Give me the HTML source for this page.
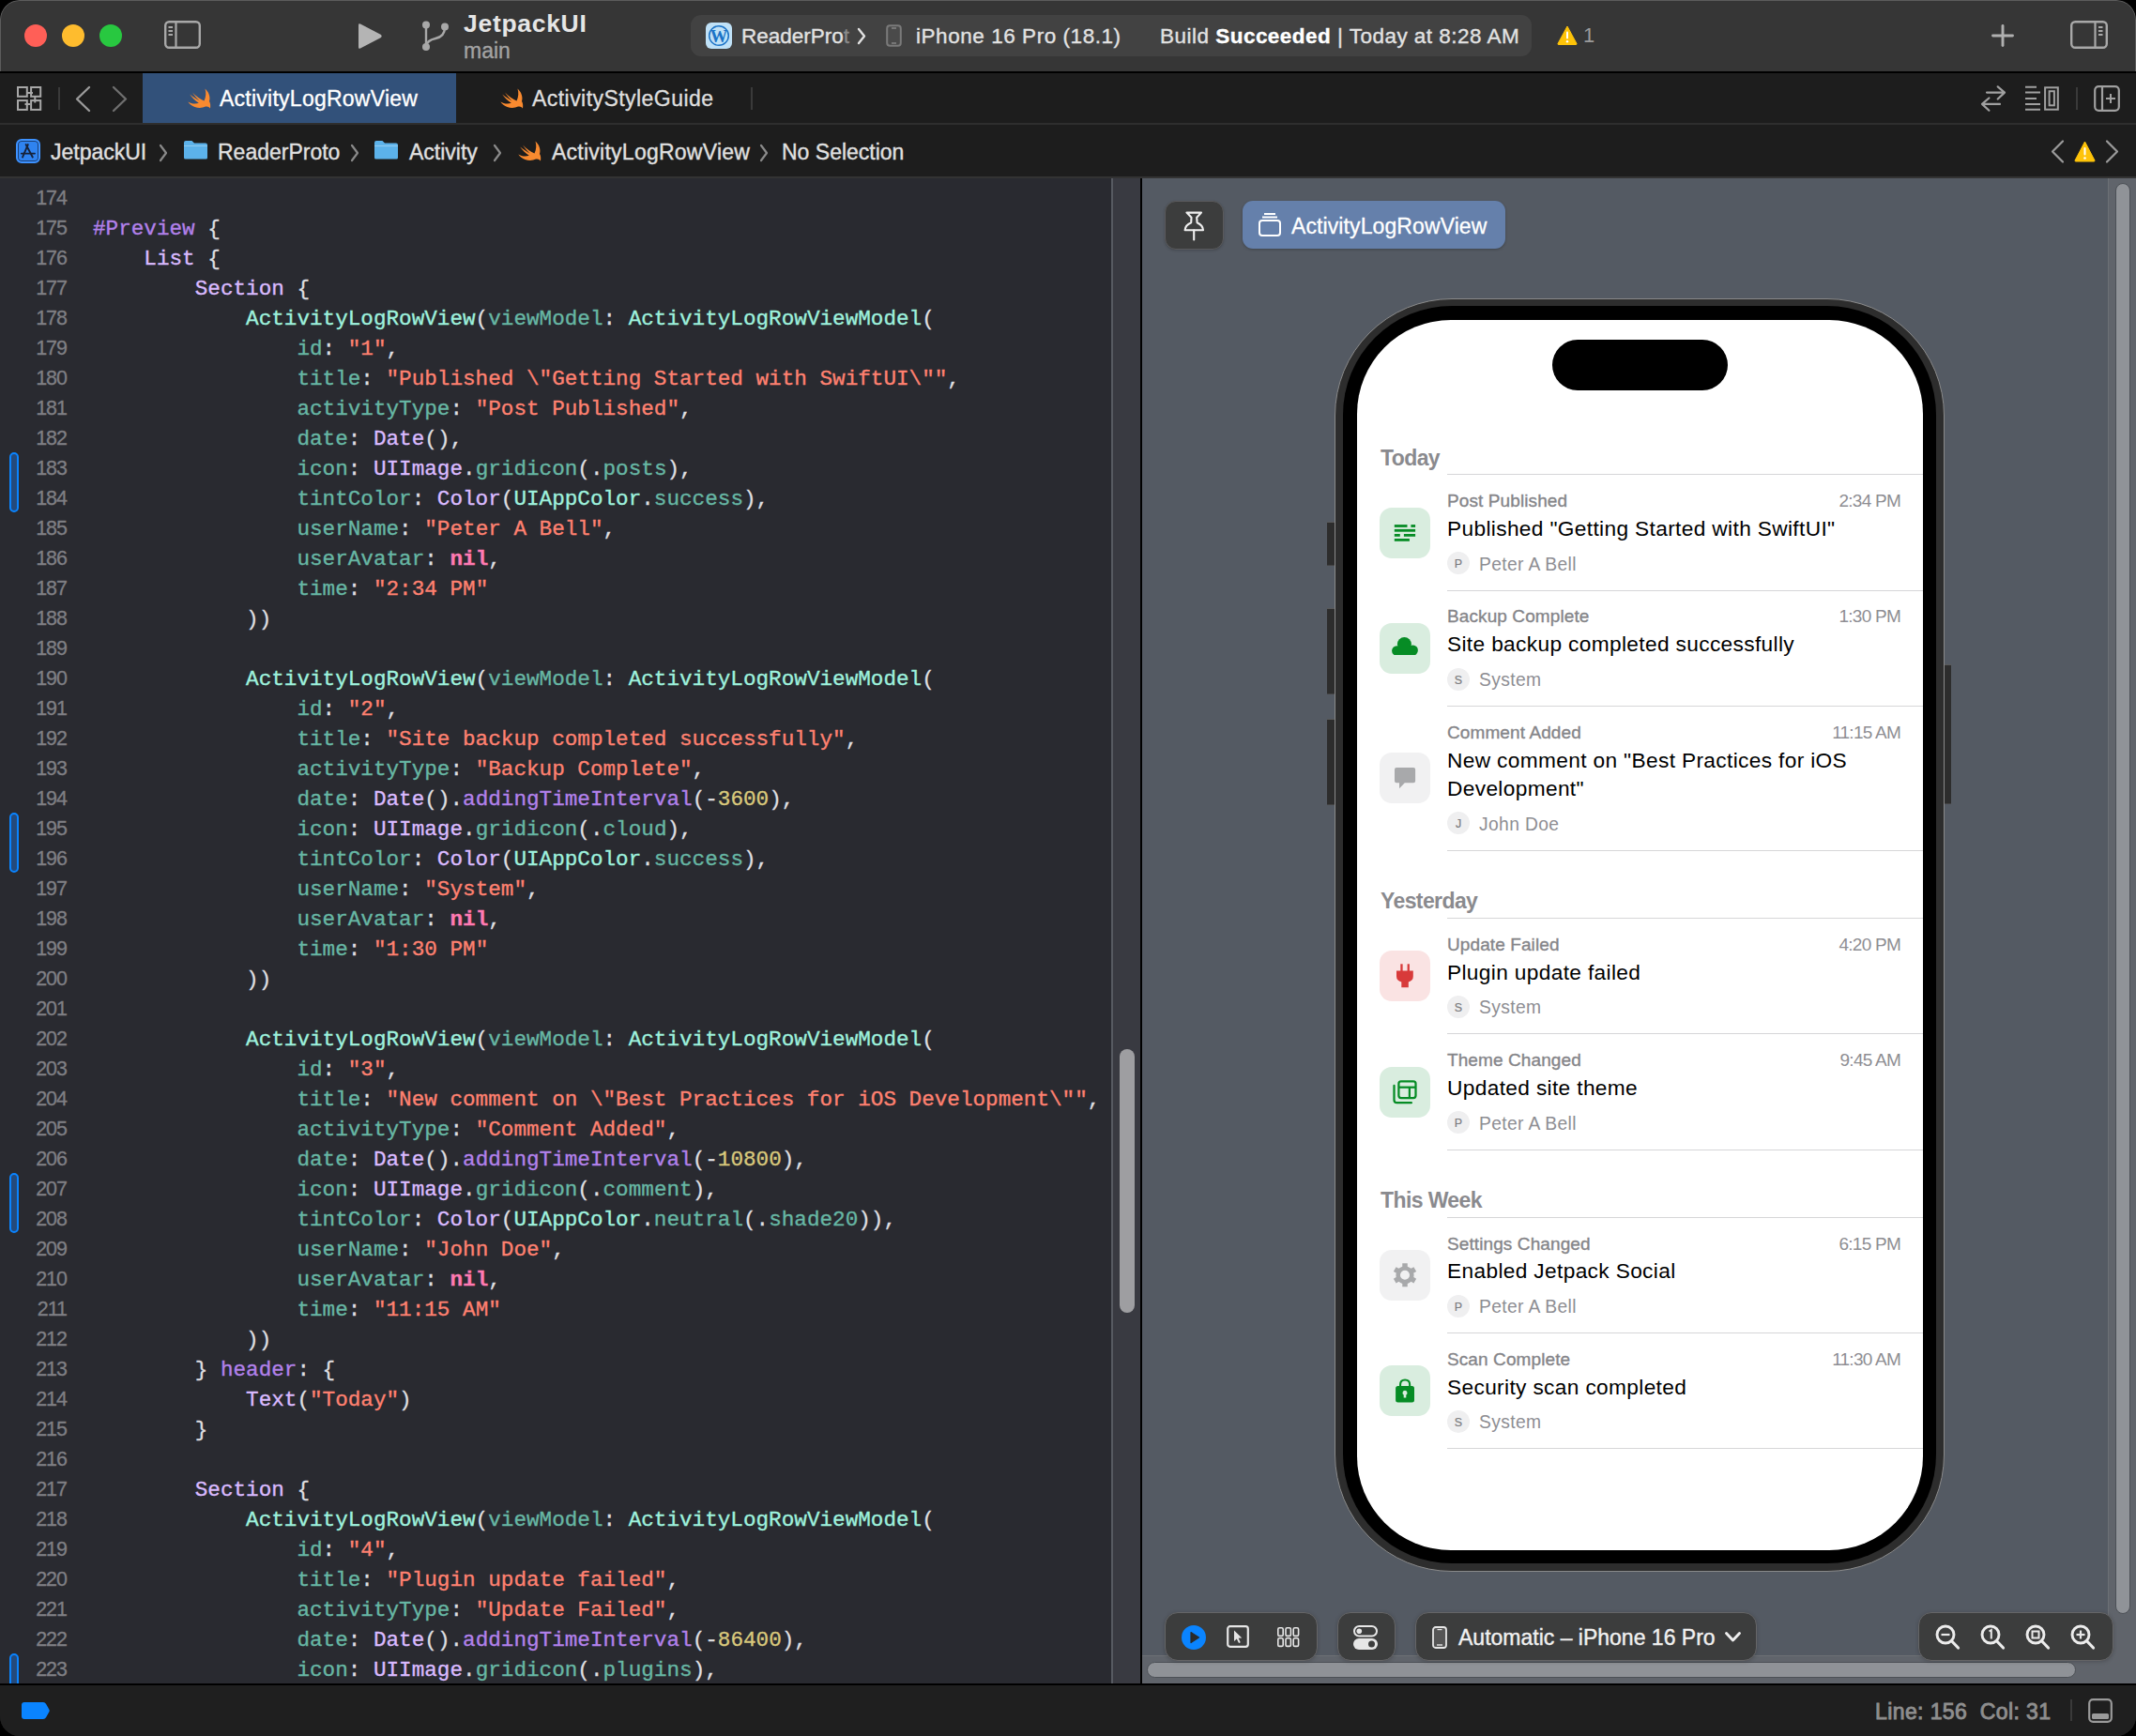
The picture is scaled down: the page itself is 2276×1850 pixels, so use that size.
<!DOCTYPE html><html><head><meta charset="utf-8"><title>Xcode</title><style>
*{margin:0;padding:0;box-sizing:border-box}
html,body{width:2276px;height:1850px;overflow:hidden;background:#000}
body{position:relative;font-family:"Liberation Sans",sans-serif}
.a{position:absolute}
.win{position:absolute;left:0;top:0;width:2276px;height:1850px;border-radius:21px;overflow:hidden;background:#1e1e1e}
.t{position:absolute;white-space:pre;line-height:1}
.u{-webkit-text-stroke:0.35px currentColor}
svg{position:absolute;overflow:visible}
/* code */
.code{position:absolute;left:0;top:196px;font-family:"Liberation Mono",monospace;font-size:22.65px;line-height:32px;white-space:pre;color:#dfdfe0}
.cl{-webkit-text-stroke:0.35px currentColor}
.ln{position:absolute;left:0;width:71px;text-align:right;color:#7f7f84;font-family:"Liberation Sans",sans-serif;font-size:21.5px;letter-spacing:-1px;margin-top:-1.5px;-webkit-text-stroke:0.3px #7f7f84}
.cl{position:absolute;left:99px}
.k{color:#ff7ab2;font-weight:bold}
.s{color:#ff8170}
.n{color:#d9c97c}
.tp{color:#dabaff}
.pt{color:#9ef1dd}
.pf{color:#67b7a4}
.of{color:#b281eb}
.mc{color:#b281eb}
</style></head><body><div class="win">
<div class="a" style="left:0;top:0;width:2276px;height:76px;background:#363636;border:1px solid #5c5c5c;border-bottom:none;border-radius:21px 21px 0 0"></div>
<div class="a" style="left:0;top:76px;width:2276px;height:2px;background:#000"></div>
<div class="a" style="left:26px;top:26px;width:24px;height:24px;border-radius:50%;background:#ff5f57"></div>
<div class="a" style="left:66px;top:26px;width:24px;height:24px;border-radius:50%;background:#febc2e"></div>
<div class="a" style="left:106px;top:26px;width:24px;height:24px;border-radius:50%;background:#28c840"></div>
<svg style="left:175px;top:22px" width="39" height="30" viewBox="0 0 39 30"><rect x="1.2" y="1.2" width="36.6" height="27.6" rx="4" fill="none" stroke="#a8a8a8" stroke-width="2.4"/><line x1="12.5" y1="1.5" x2="12.5" y2="28.5" stroke="#a8a8a8" stroke-width="2.2"/><g stroke="#a8a8a8" stroke-width="1.8"><line x1="4.5" y1="7" x2="9" y2="7"/><line x1="4.5" y1="11" x2="9" y2="11"/><line x1="4.5" y1="15" x2="9" y2="15"/></g></svg>
<svg style="left:380px;top:24px" width="28" height="29" viewBox="0 0 28 29"><path d="M2 2.5 Q2 0.5 4 1.5 L26 13 Q27.5 14.5 26 16 L4 27.5 Q2 28.5 2 26.5 Z" fill="#b4b4b4"/></svg>
<svg style="left:449px;top:22px" width="30" height="33" viewBox="0 0 30 33"><g fill="none" stroke="#a8a8a8" stroke-width="2.4"><line x1="5" y1="5" x2="5" y2="27"/><path d="M25 7 Q25 17 15 19 Q6 21 5 27"/></g><g fill="#a8a8a8"><circle cx="5" cy="4.5" r="4"/><circle cx="25" cy="6.5" r="4"/><circle cx="5" cy="28" r="4"/></g></svg>
<div class="t" style="left:494px;top:12px;font-size:26.5px;font-weight:bold;letter-spacing:0.7px;color:#e6e6e6">JetpackUI</div>
<div class="t u" style="left:494px;top:43px;font-size:23px;color:#a3a3a3">main</div>
<div class="a" style="left:736px;top:16px;width:896px;height:44px;border-radius:11px;background:#424242"></div>
<div class="a" style="left:752px;top:24px;width:28px;height:28px;border-radius:6px;background:#bfe1f7"></div>
<svg style="left:754px;top:26px" width="24" height="24" viewBox="0 0 24 24"><circle cx="12" cy="12" r="10.3" fill="none" stroke="#1c73c6" stroke-width="1.5"/><text x="12" y="18.6" text-anchor="middle" font-family="Liberation Serif" font-weight="bold" font-size="18.5" fill="#1c73c6">W</text></svg>
<div class="t u" style="left:790px;top:28px;font-size:22.5px;color:#e2e2e2">ReaderPro<span style="color:#8a8a8a">t</span></div>
<svg style="left:913px;top:29px" width="11" height="19" viewBox="0 0 11 19"><path d="M2 2 L8 9.5 L2 17" fill="none" stroke="#e2e2e2" stroke-width="2.4" stroke-linecap="round" stroke-linejoin="round"/></svg>
<svg style="left:944px;top:26px" width="17" height="24" viewBox="0 0 17 24"><rect x="1.2" y="1.2" width="14.6" height="21.6" rx="3" fill="#4a4a4a" stroke="#7a7a7a" stroke-width="2"/><line x1="6" y1="4" x2="11" y2="4" stroke="#8e8e8e" stroke-width="1.3"/><line x1="6" y1="20" x2="11" y2="20" stroke="#8e8e8e" stroke-width="1.3"/></svg>
<div class="t u" style="left:976px;top:28px;font-size:22.5px;letter-spacing:0.55px;color:#e2e2e2">iPhone 16 Pro (18.1)</div>
<div class="t u" style="left:1236px;top:28px;font-size:22.5px;letter-spacing:0.48px;color:#e2e2e2">Build <b style="color:#fff">Succeeded</b> | Today at 8:28 AM</div>
<svg style="left:1659px;top:27px" width="22" height="21" viewBox="0 0 22 21"><path d="M11 1 L21 19.5 Q21.3 20.5 20 20.5 L2 20.5 Q0.7 20.5 1 19.5 Z" fill="#fec309" stroke="#fec309" stroke-width="1" stroke-linejoin="round"/><rect x="10" y="6.5" width="2" height="8" rx="1" fill="#fff"/><circle cx="11" cy="17.3" r="1.2" fill="#fff"/></svg>
<div class="t" style="left:1687px;top:27px;font-size:22px;color:#9a9a9a">1</div>
<svg style="left:2121px;top:25px" width="26" height="26" viewBox="0 0 26 26"><g stroke="#b0b0b0" stroke-width="2.9" stroke-linecap="round"><line x1="13" y1="2.5" x2="13" y2="23.5"/><line x1="2.5" y1="13" x2="23.5" y2="13"/></g></svg>
<svg style="left:2206px;top:22px" width="40" height="30" viewBox="0 0 40 30"><rect x="1.2" y="1.2" width="37.6" height="27.6" rx="4" fill="none" stroke="#a8a8a8" stroke-width="2.4"/><line x1="26.5" y1="1.5" x2="26.5" y2="28.5" stroke="#a8a8a8" stroke-width="2.2"/><g stroke="#a8a8a8" stroke-width="1.8"><line x1="30" y1="7" x2="34.5" y2="7"/><line x1="30" y1="11" x2="34.5" y2="11"/><line x1="30" y1="15" x2="34.5" y2="15"/></g></svg>
<div class="a" style="left:0;top:78px;width:2276px;height:53px;background:#1d1d1d"></div>
<div class="a" style="left:0;top:131px;width:2276px;height:2px;background:#2e2e2e"></div>
<svg style="left:18px;top:92px" width="27" height="27" viewBox="0 0 27 27"><g fill="none" stroke="#a8a8a8" stroke-width="2"><rect x="1" y="1" width="9.8" height="9.8"/><rect x="15.1" y="1" width="10.1" height="9.8"/><rect x="1" y="15.1" width="9.8" height="9.8"/><rect x="15.1" y="15.1" width="10.1" height="9.8"/><line x1="11" y1="7.1" x2="17" y2="7.1"/><line x1="19.3" y1="11" x2="19.3" y2="17.5"/><line x1="8.5" y1="19" x2="14" y2="19"/></g></svg>
<div class="a" style="left:62px;top:93px;width:2px;height:24px;background:#3a3a3a"></div>
<svg style="left:79px;top:91px" width="18" height="29" viewBox="0 0 18 29"><path d="M16 2 L3 14.5 L16 27" fill="none" stroke="#9a9a9a" stroke-width="2.4" stroke-linecap="round" stroke-linejoin="round"/></svg>
<svg style="left:119px;top:91px" width="18" height="29" viewBox="0 0 18 29"><path d="M2 2 L15 14.5 L2 27" fill="none" stroke="#6e6e6e" stroke-width="2.4" stroke-linecap="round" stroke-linejoin="round"/></svg>
<div class="a" style="left:152px;top:78px;width:334px;height:53px;background:#32517a"></div>
<svg style="left:200px;top:94px" width="25" height="22" viewBox="0 0 25 22"><path d="M18.5 0.5 C22.5 4 24.5 9.5 23 14 C24.2 15.8 24.5 18.5 24 21.5 C22.8 19.6 20.8 19 19 19.6 C15.8 21.2 11.5 21.6 7.5 20 C4.5 18.8 2 16.8 0.3 14.5 C3.5 16.5 8 17.3 11.8 15.8 C8 13.3 4.5 9.8 2.2 6.5 C5.5 9.2 9.3 11.8 12.7 13.5 C9.8 11 7 7.5 5 4.5 C9 8.5 13.8 12 17.5 13.4 C19.5 9.5 19.8 4.5 18.5 0.5 Z" fill="#f98a2f"/></svg>
<div class="t u" style="left:234px;top:94px;font-size:23px;letter-spacing:0.25px;color:#ffffff">ActivityLogRowView</div>
<svg style="left:533px;top:94px" width="25" height="22" viewBox="0 0 25 22"><path d="M18.5 0.5 C22.5 4 24.5 9.5 23 14 C24.2 15.8 24.5 18.5 24 21.5 C22.8 19.6 20.8 19 19 19.6 C15.8 21.2 11.5 21.6 7.5 20 C4.5 18.8 2 16.8 0.3 14.5 C3.5 16.5 8 17.3 11.8 15.8 C8 13.3 4.5 9.8 2.2 6.5 C5.5 9.2 9.3 11.8 12.7 13.5 C9.8 11 7 7.5 5 4.5 C9 8.5 13.8 12 17.5 13.4 C19.5 9.5 19.8 4.5 18.5 0.5 Z" fill="#f98a2f"/></svg>
<div class="t u" style="left:567px;top:94px;font-size:23px;letter-spacing:0.45px;color:#dedede">ActivityStyleGuide</div>
<div class="a" style="left:800px;top:93px;width:2px;height:24px;background:#3a3a3a"></div>
<svg style="left:2100px;top:80px" width="50" height="50" viewBox="2100 80 50 50"><g fill="none" stroke="#a0a0a0" stroke-width="2.2" stroke-linecap="round" stroke-linejoin="round"><path d="M2117 98.6 L2136 98.6 M2128.7 92.3 L2136 98.6 L2128.7 105.5"/><path d="M2131 110.9 L2112 110.9 M2119.4 104.5 L2112 110.9 L2119.4 117.7"/></g></svg>
<svg style="left:2150px;top:80px" width="50" height="50" viewBox="2150 80 50 50"><g stroke="#a0a0a0" stroke-width="2"><line x1="2158" y1="92.8" x2="2170" y2="92.8"/><line x1="2158" y1="98.6" x2="2174" y2="98.6"/><line x1="2158" y1="105" x2="2170" y2="105"/><line x1="2158" y1="110.9" x2="2174" y2="110.9"/><line x1="2158" y1="116.8" x2="2174" y2="116.8"/></g><g fill="none" stroke="#a0a0a0" stroke-width="2"><rect x="2179.1" y="93.3" width="13.7" height="23.4"/><rect x="2183.6" y="97.2" width="5.3" height="15.1"/></g></svg>
<div class="a" style="left:2212px;top:93px;width:2px;height:24px;background:#3a3a3a"></div>
<svg style="left:2231px;top:91px" width="28" height="28" viewBox="0 0 28 28"><rect x="1.2" y="1.2" width="25.6" height="25.6" rx="4" fill="none" stroke="#a0a0a0" stroke-width="2.2"/><line x1="9" y1="1.5" x2="9" y2="26.5" stroke="#a0a0a0" stroke-width="2.2"/><g stroke="#a0a0a0" stroke-width="2"><line x1="18" y1="9" x2="18" y2="19"/><line x1="13" y1="14" x2="23" y2="14"/></g></svg>
<div class="a" style="left:0;top:133px;width:2276px;height:55px;background:#1d1d1d"></div>
<div class="a" style="left:0;top:188px;width:2276px;height:2px;background:#333333"></div>
<div class="a" style="left:17px;top:148px;width:26px;height:26px;border-radius:6px;background:#2f83f0;border:2px solid #3d92ff;box-shadow:inset 0 0 0 1px #1b3f75"></div>
<svg style="left:20px;top:151px" width="20" height="20" viewBox="0 0 20 20"><g stroke="#17233a" stroke-width="1.9" fill="none" stroke-linecap="round"><path d="M9.8 3 L4 16.5"/><path d="M7.6 3 L14.8 16.5"/><path d="M2.8 12.6 L17 12.6"/></g></svg>
<div class="t u" style="left:54px;top:151px;font-size:23px;color:#e0e0e0">JetpackUI</div>
<svg style="left:169px;top:153px" width="11" height="20" viewBox="0 0 11 20"><path d="M2 2 L8 10.0 L2 18" fill="none" stroke="#8a8a8a" stroke-width="2.2" stroke-linecap="round" stroke-linejoin="round"/></svg>
<svg style="left:195px;top:149px" width="27" height="21" viewBox="0 0 27 21"><path d="M1 3 Q1 1 3 1 L9.5 1 L12 3.5 L24 3.5 Q26 3.5 26 5.5 L26 19 Q26 20.5 24.5 20.5 L2.5 20.5 Q1 20.5 1 19 Z" fill="#5cb2ea"/><path d="M1 6.5 L26 6.5" stroke="#8fcbf2" stroke-width="1.2"/></svg>
<div class="t u" style="left:232px;top:151px;font-size:23px;color:#e0e0e0">ReaderProto</div>
<svg style="left:373px;top:153px" width="11" height="20" viewBox="0 0 11 20"><path d="M2 2 L8 10.0 L2 18" fill="none" stroke="#8a8a8a" stroke-width="2.2" stroke-linecap="round" stroke-linejoin="round"/></svg>
<svg style="left:398px;top:149px" width="27" height="21" viewBox="0 0 27 21"><path d="M1 3 Q1 1 3 1 L9.5 1 L12 3.5 L24 3.5 Q26 3.5 26 5.5 L26 19 Q26 20.5 24.5 20.5 L2.5 20.5 Q1 20.5 1 19 Z" fill="#5cb2ea"/><path d="M1 6.5 L26 6.5" stroke="#8fcbf2" stroke-width="1.2"/></svg>
<div class="t u" style="left:436px;top:151px;font-size:23px;color:#e0e0e0">Activity</div>
<svg style="left:525px;top:153px" width="11" height="20" viewBox="0 0 11 20"><path d="M2 2 L8 10.0 L2 18" fill="none" stroke="#8a8a8a" stroke-width="2.2" stroke-linecap="round" stroke-linejoin="round"/></svg>
<svg style="left:552px;top:150px" width="25" height="22" viewBox="0 0 25 22"><path d="M18.5 0.5 C22.5 4 24.5 9.5 23 14 C24.2 15.8 24.5 18.5 24 21.5 C22.8 19.6 20.8 19 19 19.6 C15.8 21.2 11.5 21.6 7.5 20 C4.5 18.8 2 16.8 0.3 14.5 C3.5 16.5 8 17.3 11.8 15.8 C8 13.3 4.5 9.8 2.2 6.5 C5.5 9.2 9.3 11.8 12.7 13.5 C9.8 11 7 7.5 5 4.5 C9 8.5 13.8 12 17.5 13.4 C19.5 9.5 19.8 4.5 18.5 0.5 Z" fill="#f98a2f"/></svg>
<div class="t u" style="left:588px;top:151px;font-size:23px;letter-spacing:0.25px;color:#e0e0e0">ActivityLogRowView</div>
<svg style="left:809px;top:153px" width="11" height="20" viewBox="0 0 11 20"><path d="M2 2 L8 10.0 L2 18" fill="none" stroke="#8a8a8a" stroke-width="2.2" stroke-linecap="round" stroke-linejoin="round"/></svg>
<div class="t u" style="left:833px;top:151px;font-size:23px;color:#e0e0e0">No Selection</div>
<svg style="left:2185px;top:149px" width="15" height="25" viewBox="0 0 15 25"><path d="M13 1.5 L2 12.5 L13 23.5" fill="none" stroke="#9a9a9a" stroke-width="2.2" stroke-linecap="round" stroke-linejoin="round"/></svg>
<svg style="left:2210px;top:150px" width="23" height="23" viewBox="0 0 23 23"><path d="M11.5 1 L22 21 Q22.3 22 21 22 L2 22 Q0.7 22 1 21 Z" fill="#fec309" stroke="#fec309" stroke-width="1" stroke-linejoin="round"/><rect x="10.5" y="7" width="2" height="8.5" rx="1" fill="#fff"/><circle cx="11.5" cy="18.5" r="1.3" fill="#fff"/></svg>
<svg style="left:2243px;top:149px" width="15" height="25" viewBox="0 0 15 25"><path d="M2 1.5 L13 12.5 L2 23.5" fill="none" stroke="#9a9a9a" stroke-width="2.2" stroke-linecap="round" stroke-linejoin="round"/></svg>
<div class="a" style="left:0;top:190px;width:1185px;height:1604px;background:#292a30;overflow:hidden">
<div class="code" style="top:6px">
<div class="ln" style="top:0px">174</div>
<div class="cl" style="top:0px"></div>
<div class="ln" style="top:32px">175</div>
<div class="cl" style="top:32px"><span class="mc">#Preview</span> {</div>
<div class="ln" style="top:64px">176</div>
<div class="cl" style="top:64px">    <span class="tp">List</span> {</div>
<div class="ln" style="top:96px">177</div>
<div class="cl" style="top:96px">        <span class="tp">Section</span> {</div>
<div class="ln" style="top:128px">178</div>
<div class="cl" style="top:128px">            <span class="pt">ActivityLogRowView</span>(<span class="pf">viewModel</span>: <span class="pt">ActivityLogRowViewModel</span>(</div>
<div class="ln" style="top:160px">179</div>
<div class="cl" style="top:160px">                <span class="pf">id</span>: <span class="s">"1"</span>,</div>
<div class="ln" style="top:192px">180</div>
<div class="cl" style="top:192px">                <span class="pf">title</span>: <span class="s">"Published \"Getting Started with SwiftUI\""</span>,</div>
<div class="ln" style="top:224px">181</div>
<div class="cl" style="top:224px">                <span class="pf">activityType</span>: <span class="s">"Post Published"</span>,</div>
<div class="ln" style="top:256px">182</div>
<div class="cl" style="top:256px">                <span class="pf">date</span>: <span class="tp">Date</span>(),</div>
<div class="ln" style="top:288px">183</div>
<div class="cl" style="top:288px">                <span class="pf">icon</span>: <span class="tp">UIImage</span>.<span class="pf">gridicon</span>(.<span class="pf">posts</span>),</div>
<div class="ln" style="top:320px">184</div>
<div class="cl" style="top:320px">                <span class="pf">tintColor</span>: <span class="tp">Color</span>(<span class="pt">UIAppColor</span>.<span class="pf">success</span>),</div>
<div class="ln" style="top:352px">185</div>
<div class="cl" style="top:352px">                <span class="pf">userName</span>: <span class="s">"Peter A Bell"</span>,</div>
<div class="ln" style="top:384px">186</div>
<div class="cl" style="top:384px">                <span class="pf">userAvatar</span>: <span class="k">nil</span>,</div>
<div class="ln" style="top:416px">187</div>
<div class="cl" style="top:416px">                <span class="pf">time</span>: <span class="s">"2:34 PM"</span></div>
<div class="ln" style="top:448px">188</div>
<div class="cl" style="top:448px">            ))</div>
<div class="ln" style="top:480px">189</div>
<div class="cl" style="top:480px"></div>
<div class="ln" style="top:512px">190</div>
<div class="cl" style="top:512px">            <span class="pt">ActivityLogRowView</span>(<span class="pf">viewModel</span>: <span class="pt">ActivityLogRowViewModel</span>(</div>
<div class="ln" style="top:544px">191</div>
<div class="cl" style="top:544px">                <span class="pf">id</span>: <span class="s">"2"</span>,</div>
<div class="ln" style="top:576px">192</div>
<div class="cl" style="top:576px">                <span class="pf">title</span>: <span class="s">"Site backup completed successfully"</span>,</div>
<div class="ln" style="top:608px">193</div>
<div class="cl" style="top:608px">                <span class="pf">activityType</span>: <span class="s">"Backup Complete"</span>,</div>
<div class="ln" style="top:640px">194</div>
<div class="cl" style="top:640px">                <span class="pf">date</span>: <span class="tp">Date</span>().<span class="of">addingTimeInterval</span>(-<span class="n">3600</span>),</div>
<div class="ln" style="top:672px">195</div>
<div class="cl" style="top:672px">                <span class="pf">icon</span>: <span class="tp">UIImage</span>.<span class="pf">gridicon</span>(.<span class="pf">cloud</span>),</div>
<div class="ln" style="top:704px">196</div>
<div class="cl" style="top:704px">                <span class="pf">tintColor</span>: <span class="tp">Color</span>(<span class="pt">UIAppColor</span>.<span class="pf">success</span>),</div>
<div class="ln" style="top:736px">197</div>
<div class="cl" style="top:736px">                <span class="pf">userName</span>: <span class="s">"System"</span>,</div>
<div class="ln" style="top:768px">198</div>
<div class="cl" style="top:768px">                <span class="pf">userAvatar</span>: <span class="k">nil</span>,</div>
<div class="ln" style="top:800px">199</div>
<div class="cl" style="top:800px">                <span class="pf">time</span>: <span class="s">"1:30 PM"</span></div>
<div class="ln" style="top:832px">200</div>
<div class="cl" style="top:832px">            ))</div>
<div class="ln" style="top:864px">201</div>
<div class="cl" style="top:864px"></div>
<div class="ln" style="top:896px">202</div>
<div class="cl" style="top:896px">            <span class="pt">ActivityLogRowView</span>(<span class="pf">viewModel</span>: <span class="pt">ActivityLogRowViewModel</span>(</div>
<div class="ln" style="top:928px">203</div>
<div class="cl" style="top:928px">                <span class="pf">id</span>: <span class="s">"3"</span>,</div>
<div class="ln" style="top:960px">204</div>
<div class="cl" style="top:960px">                <span class="pf">title</span>: <span class="s">"New comment on \"Best Practices for iOS Development\""</span>,</div>
<div class="ln" style="top:992px">205</div>
<div class="cl" style="top:992px">                <span class="pf">activityType</span>: <span class="s">"Comment Added"</span>,</div>
<div class="ln" style="top:1024px">206</div>
<div class="cl" style="top:1024px">                <span class="pf">date</span>: <span class="tp">Date</span>().<span class="of">addingTimeInterval</span>(-<span class="n">10800</span>),</div>
<div class="ln" style="top:1056px">207</div>
<div class="cl" style="top:1056px">                <span class="pf">icon</span>: <span class="tp">UIImage</span>.<span class="pf">gridicon</span>(.<span class="pf">comment</span>),</div>
<div class="ln" style="top:1088px">208</div>
<div class="cl" style="top:1088px">                <span class="pf">tintColor</span>: <span class="tp">Color</span>(<span class="pt">UIAppColor</span>.<span class="pf">neutral</span>(.<span class="pf">shade20</span>)),</div>
<div class="ln" style="top:1120px">209</div>
<div class="cl" style="top:1120px">                <span class="pf">userName</span>: <span class="s">"John Doe"</span>,</div>
<div class="ln" style="top:1152px">210</div>
<div class="cl" style="top:1152px">                <span class="pf">userAvatar</span>: <span class="k">nil</span>,</div>
<div class="ln" style="top:1184px">211</div>
<div class="cl" style="top:1184px">                <span class="pf">time</span>: <span class="s">"11:15 AM"</span></div>
<div class="ln" style="top:1216px">212</div>
<div class="cl" style="top:1216px">            ))</div>
<div class="ln" style="top:1248px">213</div>
<div class="cl" style="top:1248px">        } <span class="of">header</span>: {</div>
<div class="ln" style="top:1280px">214</div>
<div class="cl" style="top:1280px">            <span class="tp">Text</span>(<span class="s">"Today"</span>)</div>
<div class="ln" style="top:1312px">215</div>
<div class="cl" style="top:1312px">        }</div>
<div class="ln" style="top:1344px">216</div>
<div class="cl" style="top:1344px"></div>
<div class="ln" style="top:1376px">217</div>
<div class="cl" style="top:1376px">        <span class="tp">Section</span> {</div>
<div class="ln" style="top:1408px">218</div>
<div class="cl" style="top:1408px">            <span class="pt">ActivityLogRowView</span>(<span class="pf">viewModel</span>: <span class="pt">ActivityLogRowViewModel</span>(</div>
<div class="ln" style="top:1440px">219</div>
<div class="cl" style="top:1440px">                <span class="pf">id</span>: <span class="s">"4"</span>,</div>
<div class="ln" style="top:1472px">220</div>
<div class="cl" style="top:1472px">                <span class="pf">title</span>: <span class="s">"Plugin update failed"</span>,</div>
<div class="ln" style="top:1504px">221</div>
<div class="cl" style="top:1504px">                <span class="pf">activityType</span>: <span class="s">"Update Failed"</span>,</div>
<div class="ln" style="top:1536px">222</div>
<div class="cl" style="top:1536px">                <span class="pf">date</span>: <span class="tp">Date</span>().<span class="of">addingTimeInterval</span>(-<span class="n">86400</span>),</div>
<div class="ln" style="top:1568px">223</div>
<div class="cl" style="top:1568px">                <span class="pf">icon</span>: <span class="tp">UIImage</span>.<span class="pf">gridicon</span>(.<span class="pf">plugins</span>),</div>
</div>
<div class="a" style="left:10px;top:292px;width:10px;height:64px;border-radius:5px;background:#244a7c;border:2px solid #0a84ff"></div>
<div class="a" style="left:10px;top:676px;width:10px;height:64px;border-radius:5px;background:#244a7c;border:2px solid #0a84ff"></div>
<div class="a" style="left:10px;top:1060px;width:10px;height:64px;border-radius:5px;background:#244a7c;border:2px solid #0a84ff"></div>
<div class="a" style="left:10px;top:1572px;width:10px;height:64px;border-radius:5px;background:#244a7c;border:2px solid #0a84ff"></div>
</div>
<div class="a" style="left:1184px;top:190px;width:2px;height:1604px;background:#575a61"></div>
<div class="a" style="left:1186px;top:190px;width:29px;height:1604px;background:#393a41"></div>
<div class="a" style="left:1193px;top:1118px;width:16px;height:281px;border-radius:8px;background:#9e9ea1"></div>
<div class="a" style="left:1215px;top:190px;width:2px;height:1604px;background:#000"></div>
<div class="a" style="left:1217px;top:190px;width:1059px;height:1604px;background:#545a63"></div>
<div class="a" style="left:1241px;top:214px;width:63px;height:52px;border-radius:12px;background:#3c3d3d;border:1.5px solid #5a5a5c;box-shadow:0 1px 3px rgba(0,0,0,0.2)"></div>
<svg style="left:1236px;top:208px" width="70" height="60" viewBox="1236 208 70 60"><g fill="none" stroke="#f0f0f0" stroke-width="2.1" stroke-linejoin="round" stroke-linecap="round"><path d="M1264.5 226.6 L1280 226.6 L1275.2 231.8 L1275.6 237.2 Q1281.8 240 1282 245.2 L1262.6 245.2 Q1262.8 240 1269.2 237.2 L1269.5 231.8 Z"/><line x1="1272.2" y1="245.5" x2="1272.2" y2="255.5"/></g></svg>
<div class="a" style="left:1324px;top:214px;width:280px;height:51px;border-radius:11px;background:#6580ab;box-shadow:0 1px 3px rgba(0,0,0,0.25)"></div>
<svg style="left:1341px;top:226px" width="24" height="26" viewBox="0 0 24 26"><g fill="none" stroke="#fff" stroke-width="2"><rect x="1" y="9" width="22" height="16" rx="3"/><line x1="4" y1="5.5" x2="20" y2="5.5"/><line x1="6" y1="2" x2="18" y2="2"/></g></svg>
<div class="t" style="left:1376px;top:216px;font-size:23px;line-height:51px;letter-spacing:0.1px;color:#ffffff;-webkit-text-stroke:0.3px #ffffff">ActivityLogRowView</div>
<div class="a" style="left:1414px;top:556px;width:8px;height:47px;background:#2d2d2d;border-top:1px solid #5a5a5a;border-bottom:1px solid #444"></div>
<div class="a" style="left:1414px;top:648px;width:8px;height:92px;background:#2d2d2d;border-top:1px solid #5a5a5a;border-bottom:1px solid #444"></div>
<div class="a" style="left:1414px;top:766px;width:8px;height:92px;background:#2d2d2d;border-top:1px solid #5a5a5a;border-bottom:1px solid #444"></div>
<div class="a" style="left:2071px;top:708px;width:8px;height:149px;background:#2d2d2d;border-top:1px solid #5a5a5a;border-bottom:1px solid #444"></div>
<div class="a" style="left:1422px;top:318px;width:650px;height:1357px;border-radius:125px;background:#2d2d2d;border:1px solid #8a8a8a"></div>
<div class="a" style="left:1431px;top:326px;width:632px;height:1340px;border-radius:116px;background:#000"></div>
<div class="a" style="left:1446px;top:341px;width:603px;height:1311px;border-radius:100px;background:#fff;overflow:hidden" id="scr">
<div class="a" style="left:208px;top:21px;width:187px;height:54px;border-radius:27px;background:#000"></div>
<div class="t" style="left:25px;top:136.4px;font-size:23px;font-weight:bold;letter-spacing:-0.6px;color:#8a8a8e">Today</div>
<div class="a" style="left:96px;top:164.4px;width:507px;height:1px;background:#d6d6d8"></div>
<div class="t" style="left:96px;top:183.1px;font-size:19px;color:#858589;-webkit-text-stroke:0.35px #858589;letter-spacing:0.1px">Post Published</div>
<div class="t" style="right:24px;top:183.1px;font-size:19px;color:#8e8e93;letter-spacing:-0.75px">2:34 PM</div>
<div class="t" style="left:96px;top:211.0px;font-size:22.7px;color:#000;letter-spacing:0.35px">Published "Getting Started with SwiftUI"</div>
<div class="a" style="left:24px;top:199.7px;width:54px;height:54px;border-radius:13px;background:#d9eddf"></div>
<svg style="left:24px;top:199.7px" width="54" height="54" viewBox="0 0 54 54"><g stroke="#068c25" stroke-width="2.8" stroke-linecap="butt"><line x1="15.8" y1="19.5" x2="29.5" y2="19.5"/><line x1="33.4" y1="19.5" x2="38.1" y2="19.5"/><line x1="15.8" y1="24.3" x2="38.1" y2="24.3"/><line x1="15.8" y1="29.4" x2="21.8" y2="29.4"/><line x1="25.9" y1="29.4" x2="38.1" y2="29.4"/><line x1="15.8" y1="34.4" x2="31.9" y2="34.4"/></g></svg>
<div class="a" style="left:96px;top:247.4px;width:24px;height:24px;border-radius:50%;background:#efeff0"></div>
<div class="t" style="left:96px;top:247.4px;width:24px;text-align:center;font-size:12.5px;line-height:26px;color:#7c7c80;-webkit-text-stroke:0.2px #7c7c80">P</div>
<div class="t" style="left:130px;top:250.6px;font-size:19.3px;color:#8e8e93;letter-spacing:0.35px">Peter A Bell</div>
<div class="a" style="left:96px;top:287.7px;width:507px;height:1px;background:#d6d6d8"></div>
<div class="t" style="left:96px;top:306.4px;font-size:19px;color:#858589;-webkit-text-stroke:0.35px #858589;letter-spacing:0.1px">Backup Complete</div>
<div class="t" style="right:24px;top:306.4px;font-size:19px;color:#8e8e93;letter-spacing:-0.75px">1:30 PM</div>
<div class="t" style="left:96px;top:334.3px;font-size:22.7px;color:#000;letter-spacing:0.35px">Site backup completed successfully</div>
<div class="a" style="left:24px;top:323.0px;width:54px;height:54px;border-radius:13px;background:#d9eddf"></div>
<svg style="left:24px;top:323.0px" width="54" height="54" viewBox="0 0 54 54"><defs><clipPath id="cc"><rect x="0" y="0" width="54" height="34.1"/></clipPath></defs><g fill="#068c25" clip-path="url(#cc)"><circle cx="18.4" cy="29.6" r="5.3"/><circle cx="26.4" cy="22.6" r="7.5"/><circle cx="35.4" cy="29.0" r="5.5"/><rect x="17" y="26" width="19" height="9"/></g></svg>
<div class="a" style="left:96px;top:370.7px;width:24px;height:24px;border-radius:50%;background:#efeff0"></div>
<div class="t" style="left:96px;top:370.7px;width:24px;text-align:center;font-size:12.5px;line-height:26px;color:#7c7c80;-webkit-text-stroke:0.2px #7c7c80">S</div>
<div class="t" style="left:130px;top:373.9px;font-size:19.3px;color:#8e8e93;letter-spacing:0.35px">System</div>
<div class="a" style="left:96px;top:411.0px;width:507px;height:1px;background:#d6d6d8"></div>
<div class="t" style="left:96px;top:429.7px;font-size:19px;color:#858589;-webkit-text-stroke:0.35px #858589;letter-spacing:0.1px">Comment Added</div>
<div class="t" style="right:24px;top:429.7px;font-size:19px;color:#8e8e93;letter-spacing:-0.75px">11:15 AM</div>
<div class="t" style="left:96px;top:457.6px;font-size:22.7px;color:#000;letter-spacing:0.35px">New comment on "Best Practices for iOS</div>
<div class="t" style="left:96px;top:487.9px;font-size:22.7px;color:#000;letter-spacing:0.35px">Development"</div>
<div class="a" style="left:24px;top:461.4px;width:54px;height:54px;border-radius:13px;background:#f1f1f2"></div>
<svg style="left:24px;top:461.4px" width="54" height="54" viewBox="0 0 54 54"><path d="M18 15.9 L36.1 15.9 Q38.1 15.9 38.1 17.9 L38.1 30.2 Q38.1 32.2 36.1 32.2 L26.8 32.2 L21 38.2 L21 32.2 L18 32.2 Q16 32.2 16 30.2 L16 17.9 Q16 15.9 18 15.9 Z" fill="#a8a9ab"/></svg>
<div class="a" style="left:96px;top:524.3px;width:24px;height:24px;border-radius:50%;background:#efeff0"></div>
<div class="t" style="left:96px;top:524.3px;width:24px;text-align:center;font-size:12.5px;line-height:26px;color:#7c7c80;-webkit-text-stroke:0.2px #7c7c80">J</div>
<div class="t" style="left:130px;top:527.5px;font-size:19.3px;color:#8e8e93;letter-spacing:0.35px">John Doe</div>
<div class="a" style="left:96px;top:564.6px;width:507px;height:1px;background:#d6d6d8"></div>
<div class="t" style="left:25px;top:608.2px;font-size:23px;font-weight:bold;letter-spacing:-0.6px;color:#8a8a8e">Yesterday</div>
<div class="a" style="left:96px;top:637.0px;width:507px;height:1px;background:#d6d6d8"></div>
<div class="t" style="left:96px;top:655.7px;font-size:19px;color:#858589;-webkit-text-stroke:0.35px #858589;letter-spacing:0.1px">Update Failed</div>
<div class="t" style="right:24px;top:655.7px;font-size:19px;color:#8e8e93;letter-spacing:-0.75px">4:20 PM</div>
<div class="t" style="left:96px;top:683.6px;font-size:22.7px;color:#000;letter-spacing:0.35px">Plugin update failed</div>
<div class="a" style="left:24px;top:672.3px;width:54px;height:54px;border-radius:13px;background:#fae3e3"></div>
<svg style="left:24px;top:672.3px" width="54" height="54" viewBox="0 0 54 54"><g fill="#d83a3a"><rect x="22.3" y="14.3" width="2.3" height="8"/><rect x="29.6" y="14.3" width="2.3" height="8"/><path d="M18 21.4 L35.8 21.4 L35.8 27.5 Q35.8 32.2 30.8 33.4 L30.8 39.2 L23.3 39.2 L23.3 33.4 Q18 32.2 18 27.5 Z"/></g></svg>
<div class="a" style="left:96px;top:720.0px;width:24px;height:24px;border-radius:50%;background:#efeff0"></div>
<div class="t" style="left:96px;top:720.0px;width:24px;text-align:center;font-size:12.5px;line-height:26px;color:#7c7c80;-webkit-text-stroke:0.2px #7c7c80">S</div>
<div class="t" style="left:130px;top:723.2px;font-size:19.3px;color:#8e8e93;letter-spacing:0.35px">System</div>
<div class="a" style="left:96px;top:760.3px;width:507px;height:1px;background:#d6d6d8"></div>
<div class="t" style="left:96px;top:779.0px;font-size:19px;color:#858589;-webkit-text-stroke:0.35px #858589;letter-spacing:0.1px">Theme Changed</div>
<div class="t" style="right:24px;top:779.0px;font-size:19px;color:#8e8e93;letter-spacing:-0.75px">9:45 AM</div>
<div class="t" style="left:96px;top:806.9px;font-size:22.7px;color:#000;letter-spacing:0.35px">Updated site theme</div>
<div class="a" style="left:24px;top:795.6px;width:54px;height:54px;border-radius:13px;background:#d9eddf"></div>
<svg style="left:24px;top:795.6px" width="54" height="54" viewBox="0 0 54 54"><g fill="none" stroke="#068c25" stroke-width="2.25"><rect x="20.4" y="15.3" width="18.1" height="17.7" rx="2.5"/><line x1="20.4" y1="21.7" x2="38.5" y2="21.7"/><line x1="31.9" y1="21.7" x2="31.9" y2="33"/><path d="M15.5 19.9 L15.5 35.2 Q15.5 38.2 18.5 38.2 L33.9 38.2" stroke-linecap="round"/></g></svg>
<div class="a" style="left:96px;top:843.3px;width:24px;height:24px;border-radius:50%;background:#efeff0"></div>
<div class="t" style="left:96px;top:843.3px;width:24px;text-align:center;font-size:12.5px;line-height:26px;color:#7c7c80;-webkit-text-stroke:0.2px #7c7c80">P</div>
<div class="t" style="left:130px;top:846.5px;font-size:19.3px;color:#8e8e93;letter-spacing:0.35px">Peter A Bell</div>
<div class="a" style="left:96px;top:883.6px;width:507px;height:1px;background:#d6d6d8"></div>
<div class="t" style="left:25px;top:926.7px;font-size:23px;font-weight:bold;letter-spacing:-0.6px;color:#8a8a8e">This Week</div>
<div class="a" style="left:96px;top:955.8px;width:507px;height:1px;background:#d6d6d8"></div>
<div class="t" style="left:96px;top:974.5px;font-size:19px;color:#858589;-webkit-text-stroke:0.35px #858589;letter-spacing:0.1px">Settings Changed</div>
<div class="t" style="right:24px;top:974.5px;font-size:19px;color:#8e8e93;letter-spacing:-0.75px">6:15 PM</div>
<div class="t" style="left:96px;top:1002.4px;font-size:22.7px;color:#000;letter-spacing:0.35px">Enabled Jetpack Social</div>
<div class="a" style="left:24px;top:991.1px;width:54px;height:54px;border-radius:13px;background:#f1f1f2"></div>
<svg style="left:24px;top:991.1px" width="54" height="54" viewBox="0 0 54 54"><path d="M24.25 17.65 L24.25 14.35 L29.75 14.35 L29.75 17.65 A9.55 9.55 0 0 1 33.55 19.85 L36.41 18.19 L39.16 22.96 L36.30 24.61 A9.55 9.55 0 0 1 36.30 28.99 L39.16 30.64 L36.41 35.41 L33.55 33.75 A9.55 9.55 0 0 1 29.75 35.95 L29.75 39.25 L24.25 39.25 L24.25 35.95 A9.55 9.55 0 0 1 20.45 33.75 L17.59 35.41 L14.84 30.64 L17.70 28.99 A9.55 9.55 0 0 1 17.70 24.61 L14.84 22.96 L17.59 18.19 L20.45 19.85 A9.55 9.55 0 0 1 24.25 17.65 Z M32.05 26.8 A5.05 5.05 0 1 0 21.95 26.8 A5.05 5.05 0 1 0 32.05 26.8 Z" fill="#a8a9ab" fill-rule="evenodd"/></svg>
<div class="a" style="left:96px;top:1038.8px;width:24px;height:24px;border-radius:50%;background:#efeff0"></div>
<div class="t" style="left:96px;top:1038.8px;width:24px;text-align:center;font-size:12.5px;line-height:26px;color:#7c7c80;-webkit-text-stroke:0.2px #7c7c80">P</div>
<div class="t" style="left:130px;top:1042.0px;font-size:19.3px;color:#8e8e93;letter-spacing:0.35px">Peter A Bell</div>
<div class="a" style="left:96px;top:1079.1px;width:507px;height:1px;background:#d6d6d8"></div>
<div class="t" style="left:96px;top:1097.8px;font-size:19px;color:#858589;-webkit-text-stroke:0.35px #858589;letter-spacing:0.1px">Scan Complete</div>
<div class="t" style="right:24px;top:1097.8px;font-size:19px;color:#8e8e93;letter-spacing:-0.75px">11:30 AM</div>
<div class="t" style="left:96px;top:1125.7px;font-size:22.7px;color:#000;letter-spacing:0.35px">Security scan completed</div>
<div class="a" style="left:24px;top:1114.4px;width:54px;height:54px;border-radius:13px;background:#d9eddf"></div>
<svg style="left:24px;top:1114.4px" width="54" height="54" viewBox="0 0 54 54"><path d="M22.05 23 L22.05 20.5 Q22.05 15.45 27.1 15.45 Q32.15 15.45 32.15 20.5 L32.15 23" fill="none" stroke="#068c25" stroke-width="2.1"/><path d="M19.6 22.1 L34.5 22.1 Q37 22.1 37 24.6 L37 37 Q37 39.5 34.5 39.5 L19.6 39.5 Q17.1 39.5 17.1 37 L17.1 24.6 Q17.1 22.1 19.6 22.1 Z M27 26.8 A2.6 2.6 0 0 0 25.7 31.6 L25.7 34.6 L28.3 34.6 L28.3 31.6 A2.6 2.6 0 0 0 27 26.8 Z" fill="#068c25" fill-rule="evenodd"/></svg>
<div class="a" style="left:96px;top:1162.1px;width:24px;height:24px;border-radius:50%;background:#efeff0"></div>
<div class="t" style="left:96px;top:1162.1px;width:24px;text-align:center;font-size:12.5px;line-height:26px;color:#7c7c80;-webkit-text-stroke:0.2px #7c7c80">S</div>
<div class="t" style="left:130px;top:1165.3px;font-size:19.3px;color:#8e8e93;letter-spacing:0.35px">System</div>
<div class="a" style="left:96px;top:1202.4px;width:507px;height:1px;background:#d6d6d8"></div>
</div>
<div class="a" style="left:2246px;top:190px;width:1px;height:1604px;background:#6c7075"></div>
<div class="a" style="left:2247px;top:190px;width:29px;height:1604px;background:#60646b"></div>
<div class="a" style="left:2254px;top:195px;width:16px;height:1525px;border-radius:8px;background:#909398;border:1px solid #4c5056"></div>
<div class="a" style="left:1217px;top:1764px;width:1030px;height:30px;background:#60646b;border-top:1px solid #6c7075"></div>
<div class="a" style="left:1222px;top:1771px;width:990px;height:17px;border-radius:8.5px;background:#8f9297;border:1px solid #4c5056"></div>
<div class="a" style="left:1240.5px;top:1717.5px;width:163px;height:52px;border-radius:14px;background:#3c3d3d;border:1.5px solid #656567;box-shadow:0 1px 4px rgba(0,0,0,0.2)"></div>
<div class="a" style="left:1424.5px;top:1717.5px;width:62px;height:52px;border-radius:14px;background:#3c3d3d;border:1.5px solid #656567;box-shadow:0 1px 4px rgba(0,0,0,0.2)"></div>
<div class="a" style="left:1507.5px;top:1717.5px;width:364px;height:52px;border-radius:14px;background:#3c3d3d;border:1.5px solid #656567;box-shadow:0 1px 4px rgba(0,0,0,0.2)"></div>
<div class="a" style="left:2043.5px;top:1717.5px;width:208px;height:52px;border-radius:14px;background:#3c3d3d;border:1.5px solid #656567;box-shadow:0 1px 4px rgba(0,0,0,0.2)"></div>
<div class="a" style="left:1259px;top:1732px;width:26px;height:26px;border-radius:50%;background:#0a84ff"></div>
<svg style="left:1259px;top:1732px" width="26" height="26" viewBox="0 0 26 26"><path d="M10 7.5 L18.5 13 L10 18.5 Z" fill="#2a2a2a" stroke="#2a2a2a" stroke-width="1.2" stroke-linejoin="round"/></svg>
<svg style="left:1307px;top:1732px" width="24" height="24" viewBox="0 0 24 24"><rect x="1.2" y="1.2" width="21.6" height="21.6" rx="2.5" fill="none" stroke="#e6e6e6" stroke-width="2.2"/><path d="M8 5.5 L8 17 L10.8 14.5 L13 19 L14.8 18.2 L12.6 13.8 L16.3 13.5 Z" fill="#e6e6e6"/></svg>
<svg style="left:1361px;top:1734px" width="24" height="21" viewBox="0 0 24 21"><g fill="none" stroke="#e6e6e6" stroke-width="1.6"><rect x="0.8" y="0.8" width="5.4" height="8.6" rx="1.5"/><rect x="9.0" y="0.8" width="5.4" height="8.6" rx="1.5"/><rect x="17.2" y="0.8" width="5.4" height="8.6" rx="1.5"/><rect x="0.8" y="11.8" width="5.4" height="8.6" rx="1.5"/><rect x="9.0" y="11.8" width="5.4" height="8.6" rx="1.5"/><rect x="17.2" y="11.8" width="5.4" height="8.6" rx="1.5"/></g></svg>
<svg style="left:1442px;top:1732px" width="26" height="26" viewBox="0 0 26 26"><rect x="1" y="1" width="24" height="10.5" rx="5.25" fill="none" stroke="#e6e6e6" stroke-width="2"/><circle cx="6.3" cy="6.2" r="2.8" fill="#e6e6e6"/><rect x="0" y="14" width="26" height="12" rx="6" fill="#e6e6e6"/><circle cx="19.5" cy="20" r="3.5" fill="#3c3d3d"/></svg>
<svg style="left:1526px;top:1733px" width="16" height="24" viewBox="0 0 16 24"><rect x="1" y="1" width="14" height="22" rx="2.8" fill="#555" stroke="#e6e6e6" stroke-width="1.8"/><line x1="5.5" y1="3.6" x2="10.5" y2="3.6" stroke="#e6e6e6" stroke-width="1.2"/><line x1="5" y1="20" x2="11" y2="20" stroke="#e6e6e6" stroke-width="1.4"/></svg>
<div class="t" style="left:1554px;top:1720px;font-size:23px;line-height:51px;letter-spacing:0px;color:#f0f0f0;-webkit-text-stroke:0.4px #f0f0f0">Automatic &#x2013; iPhone 16 Pro</div>
<svg style="left:1838px;top:1739px" width="17" height="11" viewBox="0 0 17 11"><path d="M1.5 1.5 L8.5 9 L15.5 1.5" fill="none" stroke="#eeeeee" stroke-width="2.9" stroke-linecap="round" stroke-linejoin="round"/></svg>
<svg style="left:2062px;top:1731px" width="27" height="28" viewBox="0 0 27 28"><circle cx="11" cy="11" r="9" fill="none" stroke="#ececec" stroke-width="2.9"/><line x1="17.8" y1="18" x2="24.5" y2="25" stroke="#ececec" stroke-width="3.2" stroke-linecap="round"/><line x1="6.5" y1="11" x2="15.5" y2="11" stroke="#e8e8e8" stroke-width="2.2"/></svg>
<svg style="left:2110px;top:1731px" width="27" height="28" viewBox="0 0 27 28"><circle cx="11" cy="11" r="9" fill="none" stroke="#ececec" stroke-width="2.9"/><line x1="17.8" y1="18" x2="24.5" y2="25" stroke="#ececec" stroke-width="3.2" stroke-linecap="round"/><path d="M9.5 7.5 L11.8 6 L11.8 15.5" fill="none" stroke="#e8e8e8" stroke-width="2"/></svg>
<svg style="left:2158px;top:1731px" width="27" height="28" viewBox="0 0 27 28"><circle cx="11" cy="11" r="9" fill="none" stroke="#ececec" stroke-width="2.9"/><line x1="17.8" y1="18" x2="24.5" y2="25" stroke="#ececec" stroke-width="3.2" stroke-linecap="round"/><rect x="7.5" y="7.5" width="7" height="7" fill="none" stroke="#e8e8e8" stroke-width="2"/></svg>
<svg style="left:2206px;top:1731px" width="27" height="28" viewBox="0 0 27 28"><circle cx="11" cy="11" r="9" fill="none" stroke="#ececec" stroke-width="2.9"/><line x1="17.8" y1="18" x2="24.5" y2="25" stroke="#ececec" stroke-width="3.2" stroke-linecap="round"/><g stroke="#e8e8e8" stroke-width="2.2"><line x1="6.5" y1="11" x2="15.5" y2="11"/><line x1="11" y1="6.5" x2="11" y2="15.5"/></g></svg>
<div class="a" style="left:0;top:1794px;width:2276px;height:2px;background:#000"></div>
<div class="a" style="left:0;top:1796px;width:2276px;height:54px;background:#1f1f1f"></div>
<svg style="left:23px;top:1814px" width="30" height="18" viewBox="0 0 30 18"><path d="M3 0 L23 0 Q25 0 26 1.8 L29.5 8 Q30 9 29.5 10 L26 16.2 Q25 18 23 18 L3 18 Q0 18 0 15 L0 3 Q0 0 3 0 Z" fill="#0a84ff"/></svg>
<div class="t" style="left:1998px;top:1812.5px;font-size:23px;color:#8e8e8e;-webkit-text-stroke:0.9px #8e8e8e;letter-spacing:0.4px">Line: 156  Col: 31</div>
<div class="a" style="left:2206px;top:1811px;width:2px;height:23px;background:#3a3a3a"></div>
<svg style="left:2225px;top:1810px" width="26" height="26" viewBox="0 0 26 26"><rect x="1.2" y="1.2" width="23.6" height="23.6" rx="4" fill="none" stroke="#9a9a9a" stroke-width="2.2"/><rect x="4" y="16" width="18" height="6" rx="1.5" fill="#9a9a9a"/></svg>
</div></body></html>
